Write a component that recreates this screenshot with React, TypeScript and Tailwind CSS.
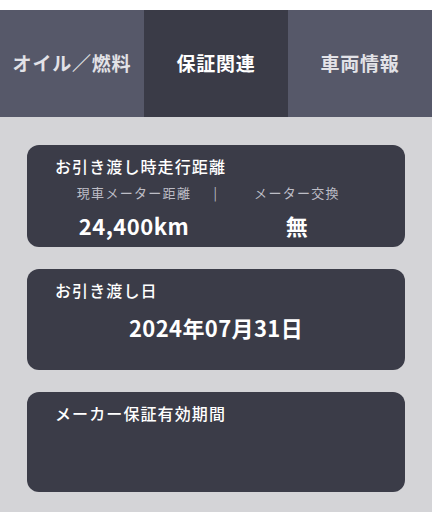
const font = { fontFamily: '"Noto Sans CJK JP", "Noto Sans", sans-serif' };

type Tab = { label: string; active?: boolean };

const tabs: Tab[] = [
	{ label: "オイル／燃料" },
	{ label: "保証関連", active: true },
	{ label: "車両情報" },
];

function Card({ title, height, children }: { title: string; height: string; children?: React.ReactNode }) {
	return (
		<section className={`mx-[27px] rounded-[12px] bg-[#3b3c48] pl-[28px] pt-[9px] ${height}`}>
			<h2 className="text-[16px] font-medium leading-[24px] tracking-[1.1px] text-white">{title}</h2>
			{children}
		</section>
	);
}

export default function App() {
	return (
		<div className="h-[512px] w-[432px] overflow-hidden bg-[#d4d4d7]" style={font}>
			<div className="h-[10px] bg-white" />
			<nav className="grid h-[107px] grid-cols-3">
				{tabs.map((tab) => (
					<div
						key={tab.label}
						className={
							tab.active
								? "flex items-center justify-center bg-[#3a3b47] text-[19px] font-bold tracking-[0.8px] text-white"
								: "flex items-center justify-center bg-[#565869] text-[19px] font-bold tracking-[0.8px] text-[#e2e2e7]"
						}
					>
						{tab.label}
					</div>
				))}
			</nav>

			<div className="mt-[28px] flex flex-col gap-[22px]">
				<Card title="お引き渡し時走行距離" height="h-[102px]">
					<div className="ml-[20px] mt-[5px] flex items-center whitespace-nowrap text-[13px] leading-[20px] tracking-[1.3px] text-[#bdbdc6]">
						<span className="w-[118px] text-center">現車メーター距離</span>
						<span className="w-[60px] pr-[14px] text-center">|</span>
						<span className="w-[88px] text-center">メーター交換</span>
					</div>
					<div className="ml-[20px] mt-[7px] flex items-center whitespace-nowrap text-[22px] font-bold leading-[30px] tracking-[0.5px] text-white">
						<span className="w-[118px] text-center">24,400km</span>
						<span className="w-[60px]" />
						<span className="w-[88px] text-center">無</span>
					</div>
				</Card>

				<Card title="お引き渡し日" height="h-[101px]">
					<p className="-ml-[28px] mt-[10px] text-center text-[22px] font-bold leading-[30px] tracking-[0.4px] text-white">
						2024年07月31日
					</p>
				</Card>

				<Card title="メーカー保証有効期間" height="h-[100px]" />
			</div>
		</div>
	);
}
